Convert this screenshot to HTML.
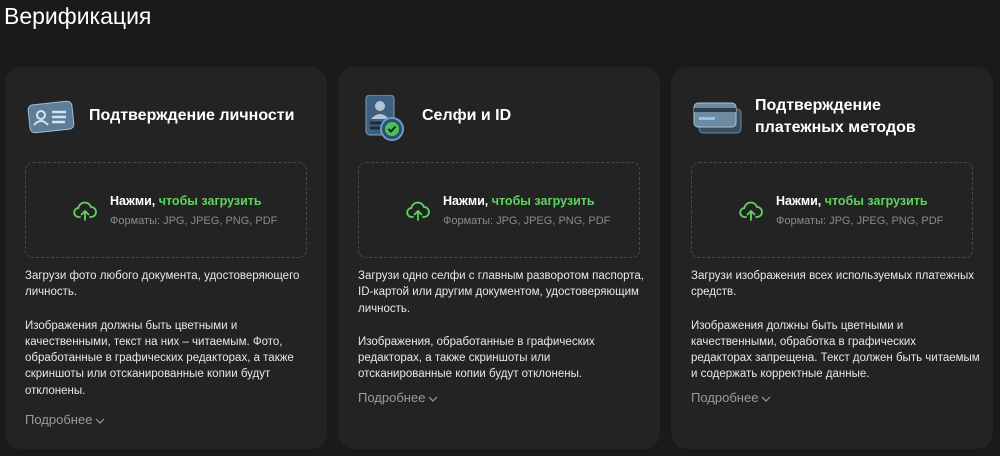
<!DOCTYPE html>
<html><head><meta charset="utf-8"><style>
*{margin:0;padding:0;box-sizing:border-box}
body{width:1000px;height:456px;background:#1a1a1a;font-family:"Liberation Sans","DejaVu Sans",sans-serif;color:#fff;position:relative;overflow:hidden}
h1{position:absolute;left:4px;top:3px;font-size:23px;font-weight:400;color:#fff}
.card{position:absolute;top:67px;width:322px;height:382px;background:#232323;border-radius:16px}
.icon{position:absolute;left:20px;top:28px;width:52px;height:48px}
.title{position:absolute;left:84px;font-size:16px;font-weight:700;line-height:22px}
.drop{position:absolute;left:20px;top:95px;width:282px;height:96px;border:1.5px dashed #4a4a4a;border-radius:8px}
.up{position:absolute;left:47px;top:37px}
.l1{position:absolute;left:84px;top:31px;font-size:12.5px;font-weight:700}
.l1 span{color:#5fd35f}
.l2{position:absolute;left:84px;top:52px;font-size:11px;color:#8a8a8a}
.txt{position:absolute;left:20px;top:201px;white-space:nowrap;font-size:11.5px;line-height:16.3px;color:#e8e8e8}
.txt p+p{margin-top:17px}
.more{position:absolute;left:20px;font-size:13px;color:#9a9a9a}
.more svg{vertical-align:middle;margin-left:3px}
</style></head><body>
<h1>Верификация</h1>

<div class="card" style="left:5px">
<svg class="icon" viewBox="0 0 52 48"><rect x="4" y="8" width="44" height="28" rx="5" transform="rotate(-6 26 22)" fill="#5d7d98" stroke="#9ec0d8"/><circle cx="16" cy="20" r="4" fill="none" stroke="#d0e4f0" stroke-width="2"/><path d="M9 30q7-8 14 0" fill="none" stroke="#d0e4f0" stroke-width="2"/><path d="M27 17h14M27 22h14M27 27h13" stroke="#d0e4f0" stroke-width="2.5"/></svg>
<div class="title" style="top:38px">Подтверждение личности</div>
<div class="drop"><svg class="up" width="24" height="22" viewBox="0 0 24 22" fill="none" stroke="#5fd35f" stroke-width="1.8" stroke-linecap="round"><path d="M7 17H6a4.5 4.5 0 0 1-.6-9A6.5 6.5 0 0 1 18 7a4.5 4.5 0 0 1 0 10h-1"/><path d="M12 20v-9M8.5 14.5L12 11l3.5 3.5"/></svg><div class="l1">Нажми, <span>чтобы загрузить</span></div><div class="l2">Форматы: JPG, JPEG, PNG, PDF</div></div>
<div class="txt"><p>Загрузи фото любого документа, удостоверяющего<br>личность.</p><p>Изображения должны быть цветными и<br>качественными, текст на них – читаемым. Фото,<br>обработанные в графических редакторах, а также<br>скриншоты или отсканированные копии будут<br>отклонены.</p></div>
<div class="more" style="top:345px">Подробнее<svg width="10" height="6" viewBox="0 0 10 6"><path d="M1 1l4 4 4-4" fill="none" stroke="#9a9a9a" stroke-width="1.2"/></svg></div>
</div>

<div class="card" style="left:338px">
<svg class="icon" viewBox="0 0 52 48"><rect x="8" y="0" width="28" height="40" rx="4" fill="#3d5f80" stroke="#7ea4c4"/><circle cx="22" cy="11" r="5" fill="#b0c4d4"/><path d="M13 24q9-10 18 0z" fill="#b0c4d4"/><path d="M12 28h20M12 33h14" stroke="#1e2a36" stroke-width="3"/><circle cx="34" cy="34" r="11" fill="#2a4f72" stroke="#6a9cc4" stroke-width="2"/><circle cx="34" cy="34" r="7" fill="#4cc05a"/><path d="M30.5 34l2.5 2.5 4.5-5" stroke="#0d2a12" stroke-width="2" fill="none"/></svg>
<div class="title" style="top:38px">Селфи и ID</div>
<div class="drop"><svg class="up" width="24" height="22" viewBox="0 0 24 22" fill="none" stroke="#5fd35f" stroke-width="1.8" stroke-linecap="round"><path d="M7 17H6a4.5 4.5 0 0 1-.6-9A6.5 6.5 0 0 1 18 7a4.5 4.5 0 0 1 0 10h-1"/><path d="M12 20v-9M8.5 14.5L12 11l3.5 3.5"/></svg><div class="l1">Нажми, <span>чтобы загрузить</span></div><div class="l2">Форматы: JPG, JPEG, PNG, PDF</div></div>
<div class="txt"><p>Загрузи одно селфи с главным разворотом паспорта,<br>ID-картой или другим документом, удостоверяющим<br>личность.</p><p>Изображения, обработанные в графических<br>редакторах, а также скриншоты или<br>отсканированные копии будут отклонены.</p></div>
<div class="more" style="top:323px">Подробнее<svg width="10" height="6" viewBox="0 0 10 6"><path d="M1 1l4 4 4-4" fill="none" stroke="#9a9a9a" stroke-width="1.2"/></svg></div>
</div>

<div class="card" style="left:671px">
<svg class="icon" viewBox="0 0 52 48"><rect x="8" y="14" width="42" height="24" rx="4" fill="#3a4e60" stroke="#6a8aa4"/><rect x="3" y="8" width="42" height="24" rx="4" fill="#6e8aa0" stroke="#a8c4d8"/><rect x="3" y="13" width="42" height="4" fill="#2e3e4c"/><rect x="8" y="22" width="16" height="3" fill="#8ac4ec"/></svg>
<div class="title" style="top:28px">Подтверждение<br>платежных методов</div>
<div class="drop"><svg class="up" width="24" height="22" viewBox="0 0 24 22" fill="none" stroke="#5fd35f" stroke-width="1.8" stroke-linecap="round"><path d="M7 17H6a4.5 4.5 0 0 1-.6-9A6.5 6.5 0 0 1 18 7a4.5 4.5 0 0 1 0 10h-1"/><path d="M12 20v-9M8.5 14.5L12 11l3.5 3.5"/></svg><div class="l1">Нажми, <span>чтобы загрузить</span></div><div class="l2">Форматы: JPG, JPEG, PNG, PDF</div></div>
<div class="txt"><p>Загрузи изображения всех используемых платежных<br>средств.</p><p>Изображения должны быть цветными и<br>качественными, обработка в графических<br>редакторах запрещена. Текст должен быть читаемым<br>и содержать корректные данные.</p></div>
<div class="more" style="top:323px">Подробнее<svg width="10" height="6" viewBox="0 0 10 6"><path d="M1 1l4 4 4-4" fill="none" stroke="#9a9a9a" stroke-width="1.2"/></svg></div>
</div>
</body></html>
